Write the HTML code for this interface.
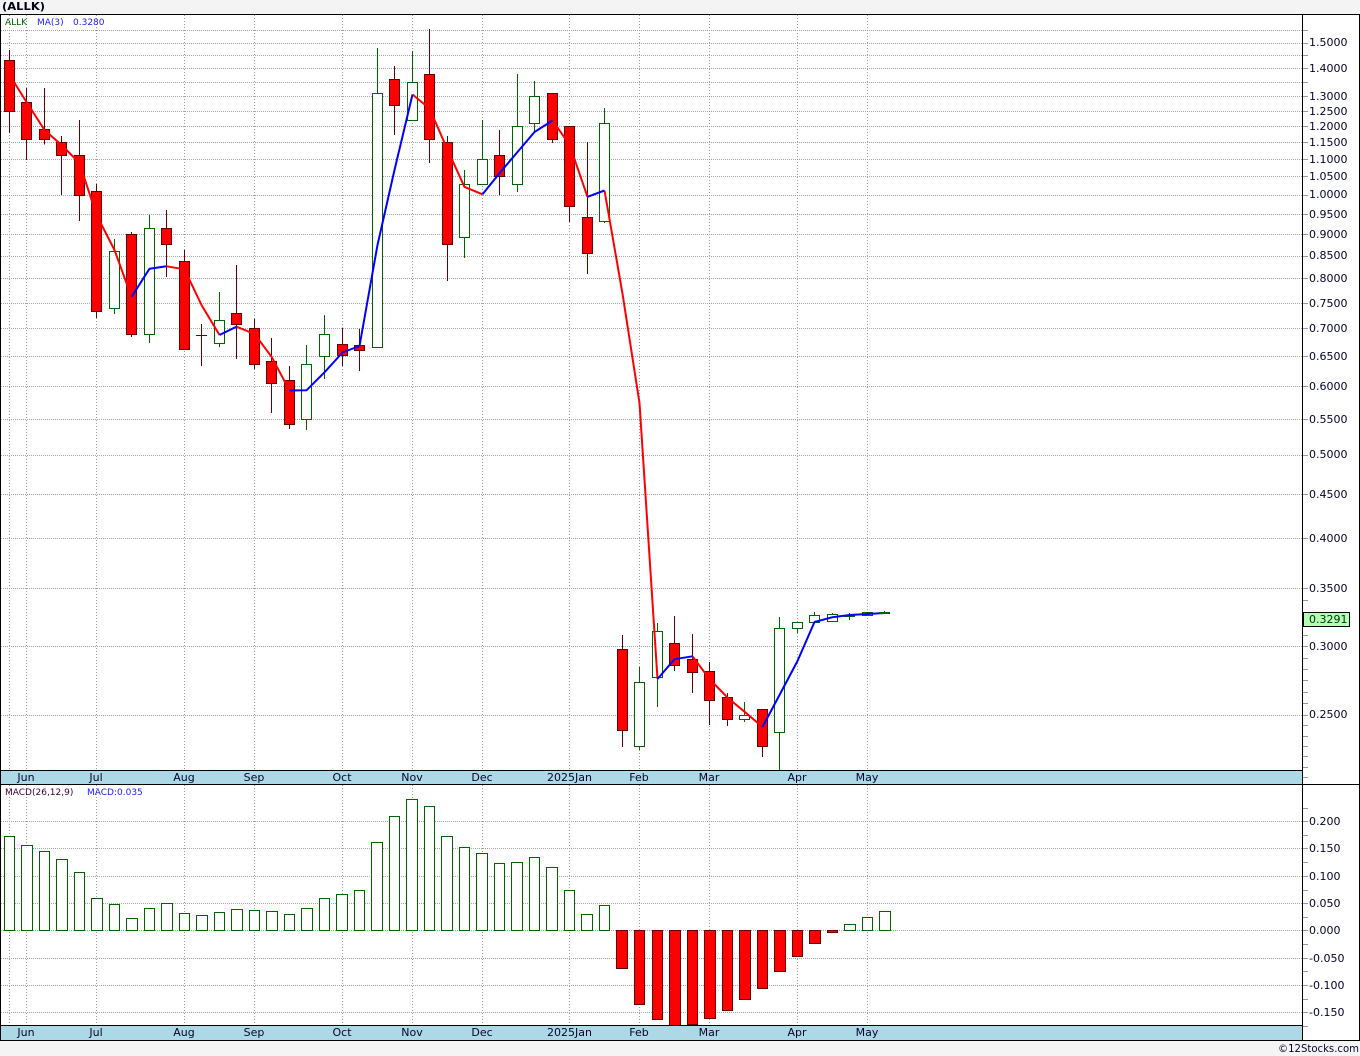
<!DOCTYPE html>
<html><head><meta charset="utf-8"><title>ALLK</title>
<style>
html,body{margin:0;padding:0;background:#f4f4f4;width:1360px;height:1056px;overflow:hidden}
svg{display:block}
text{font-family:"DejaVu Sans",Verdana,sans-serif;font-size:11px;fill:#05052e}
.c{shape-rendering:crispEdges}
.r{fill:#f00;stroke:#660000}
.g{fill:#fff;stroke:#006400}
.m text{text-anchor:middle}
.s{font-size:9px}
</style></head><body>
<svg width="1360" height="1056" viewBox="0 0 1360 1056" xmlns="http://www.w3.org/2000/svg">
<rect x="0" y="0" width="1360" height="1056" fill="#f4f4f4"/>
<rect x="0" y="14" width="1360" height="1026" fill="#fff"/>
<text x="2" y="10" textLength="43" lengthAdjust="spacingAndGlyphs" style="font-weight:bold;fill:#000014">(ALLK)</text>

<!-- grid -->
<g class="c" fill="none" stroke="#a6a6a6" stroke-dasharray="1 1">
<path d="M1 30.5H1302M1 43.5H1302M1 55.5H1302M1 68.5H1302M1 82.5H1302M1 96.5H1302M1 111.5H1302M1 126.5H1302M1 142.5H1302M1 159.5H1302M1 176.5H1302M1 195.5H1302M1 214.5H1302M1 234.5H1302M1 256.5H1302M1 278.5H1302M1 303.5H1302M1 328.5H1302M1 356.5H1302M1 386.5H1302M1 419.5H1302M1 455.5H1302M1 494.5H1302M1 538.5H1302M1 588.5H1302M1 646.5H1302M1 715.5H1302"/>
<path d="M1 821.5H1302M1 848.5H1302M1 876.5H1302M1 903.5H1302M1 930.5H1302M1 958.5H1302M1 985.5H1302M1 1012.5H1302"/>
</g>
<g class="c" fill="none" stroke="#999" stroke-dasharray="1 2">
<path d="M9.5 15V770M26.5 15V770M96.5 15V770M184.5 15V770M254.5 15V770M342.5 15V770M412.5 15V770M482.5 15V770M569.5 15V770M639.5 15V770M709.5 15V770M797.5 15V770M867.5 15V770"/>
<path d="M9.5 785V1025M26.5 785V1025M96.5 785V1025M184.5 785V1025M254.5 785V1025M342.5 785V1025M412.5 785V1025M482.5 785V1025M569.5 785V1025M639.5 785V1025M709.5 785V1025M797.5 785V1025M867.5 785V1025"/>
</g>

<!-- wicks -->
<path class="c" fill="none" stroke="#660000" d="M9.5 50V133M26.5 88V160M44.5 88V144.5M61.5 136V195M79.5 120V221M96.5 184V318M131.5 232V337M166.5 210V277M184.5 250V350M201.5 324V366M236.5 265V359M254.5 319V369M271.5 338V413M289.5 366V429M342.5 328V366M359.5 329V371M394.5 66V135M429.5 29V163M447.5 136V281M499.5 130V195M552.5 93V143M569.5 126V222M587.5 142V274M622.5 635V747M674.5 616V671M692.5 634V693M709.5 662V725M727.5 693V726M762.5 709V757M196 335.5H207"/>
<path class="c" fill="none" stroke="#006400" d="M114.5 239V314M149.5 215V343M219.5 292V347M306.5 345V430M324.5 315V379M377.5 48V347M412.5 51V120M464.5 170V258M482.5 120V184M517.5 74V192M534.5 81V133M604.5 108V223M639.5 667V750M657.5 623V707M744.5 702V722M779.5 617V770M797.5 622V633M814.5 612V622M832.5 613V621M849.5 613V620M867.5 612V615M884.5 611V614"/>

<!-- candle bodies -->
<g class="c">
<rect class="r" x="4.5" y="60.5" width="10" height="51"/>
<rect class="r" x="21.5" y="102.5" width="10" height="37"/>
<rect class="r" x="39.5" y="129.5" width="10" height="10"/>
<rect class="r" x="56.5" y="142.5" width="10" height="13"/>
<rect class="r" x="74.5" y="155.5" width="10" height="40"/>
<rect class="r" x="91.5" y="191.5" width="10" height="120"/>
<rect class="g" x="109.5" y="251.5" width="10" height="57"/>
<rect class="r" x="126.5" y="234.5" width="10" height="100"/>
<rect class="g" x="144.5" y="228.5" width="10" height="106"/>
<rect class="r" x="161.5" y="228.5" width="10" height="16"/>
<rect class="r" x="179.5" y="261.5" width="10" height="88"/>
<rect class="g" x="214.5" y="320.5" width="10" height="23"/>
<rect class="r" x="231.5" y="313.5" width="10" height="11"/>
<rect class="r" x="249.5" y="328.5" width="10" height="36"/>
<rect class="r" x="266.5" y="361.5" width="10" height="22"/>
<rect class="r" x="284.5" y="380.5" width="10" height="44"/>
<rect class="g" x="301.5" y="364.5" width="10" height="55"/>
<rect class="g" x="319.5" y="334.5" width="10" height="22"/>
<rect class="r" x="337.5" y="344.5" width="10" height="11"/>
<rect class="r" x="354.5" y="345.5" width="10" height="5"/>
<rect class="g" x="372.5" y="93.5" width="10" height="254"/>
<rect class="r" x="389.5" y="79.5" width="10" height="26"/>
<rect class="g" x="407.5" y="82.5" width="10" height="38"/>
<rect class="r" x="424.5" y="74.5" width="10" height="65"/>
<rect class="r" x="442.5" y="142.5" width="10" height="102"/>
<rect class="g" x="459.5" y="184.5" width="10" height="53"/>
<rect class="g" x="477.5" y="159.5" width="10" height="25"/>
<rect class="r" x="494.5" y="155.5" width="10" height="21"/>
<rect class="g" x="512.5" y="126.5" width="10" height="58"/>
<rect class="g" x="529.5" y="96.5" width="10" height="27"/>
<rect class="r" x="547.5" y="93.5" width="10" height="46"/>
<rect class="r" x="564.5" y="126.5" width="10" height="80"/>
<rect class="r" x="582.5" y="217.5" width="10" height="36"/>
<rect class="g" x="599.5" y="123.5" width="10" height="98"/>
<rect class="r" x="617.5" y="649.5" width="10" height="81"/>
<rect class="g" x="634.5" y="682.5" width="10" height="64"/>
<rect class="g" x="652.5" y="631.5" width="10" height="46"/>
<rect class="r" x="669.5" y="643.5" width="10" height="22"/>
<rect class="r" x="687.5" y="659.5" width="10" height="13"/>
<rect class="r" x="704.5" y="671.5" width="10" height="29"/>
<rect class="r" x="722.5" y="697.5" width="10" height="22"/>
<rect class="g" x="739.5" y="715.5" width="10" height="4"/>
<rect class="r" x="757.5" y="709.5" width="10" height="37"/>
<rect class="g" x="774.5" y="628.5" width="10" height="104"/>
<rect class="g" x="792.5" y="622.5" width="10" height="6"/>
<rect class="g" x="809.5" y="615.5" width="10" height="7"/>
<rect class="g" x="827.5" y="614.5" width="10" height="7"/>
<rect class="g" x="844.5" y="615.5" width="10" height="1"/>
<rect class="g" x="862.5" y="612.5" width="10" height="3"/>
</g>

<!-- MA line -->
<g fill="none" stroke-width="2" stroke-linejoin="round">
<g stroke="#ff0000">
<polyline points="9.5,75 26.5,102 44.5,130 61.5,145 79.5,163 96.5,215 114.5,250 131.5,297"/>
<polyline points="166.5,266.3 184.5,269.3 201.5,305 219.5,335"/>
<polyline points="236.5,326.7 254.5,334 271.5,356.7 289.5,390.5"/>
<polyline points="412.5,94.5 429.5,108.5 447.5,149.6 464.5,186.9 482.5,194.3"/>
<polyline points="552.5,120.5 569.5,144.7 587.5,196.8"/>
<polyline points="604.5,190.5 622.5,293.7 639.5,403 657.5,679"/>
<polyline points="692.5,656.3 709.5,679 727.5,697.6 744.5,711.7 762.5,727"/>
</g>
<g stroke="#0000ff">
<polyline points="131.5,297 149.5,268.7 166.5,266.3"/>
<polyline points="219.5,335 236.5,326.7"/>
<polyline points="289.5,390.5 306.5,390.3 324.5,372.3 342.5,352.5 359.5,346 377.5,245 394.5,170 412.5,94.5"/>
<polyline points="482.5,194.3 499.5,173.2 517.5,152 534.5,132 552.5,120.5"/>
<polyline points="587.5,196.8 604.5,190.5"/>
<polyline points="657.5,679 674.5,659.2 692.5,656.3"/>
<polyline points="762.5,727 779.5,695 797.5,661 814.5,622 832.5,617.2 849.5,615 867.5,614 884.5,613"/>
</g>
</g>
<rect class="c" x="879" y="612" width="11" height="2" fill="#006400"/>

<!-- MACD bars -->
<g class="c">
<rect class="g" x="4.5" y="836.5" width="10" height="94"/>
<rect class="g" x="21.5" y="845.5" width="11" height="85"/>
<rect class="g" x="39.5" y="851.5" width="10" height="79"/>
<rect class="g" x="56.5" y="859.5" width="11" height="71"/>
<rect class="g" x="74.5" y="872.5" width="10" height="58"/>
<rect class="g" x="91.5" y="898.5" width="11" height="32"/>
<rect class="g" x="109.5" y="904.5" width="10" height="26"/>
<rect class="g" x="126.5" y="918.5" width="11" height="12"/>
<rect class="g" x="144.5" y="908.5" width="10" height="22"/>
<rect class="g" x="161.5" y="903.5" width="11" height="27"/>
<rect class="g" x="179.5" y="913.5" width="10" height="17"/>
<rect class="g" x="196.5" y="915.5" width="11" height="15"/>
<rect class="g" x="214.5" y="912.5" width="10" height="18"/>
<rect class="g" x="231.5" y="909.5" width="11" height="21"/>
<rect class="g" x="249.5" y="910.5" width="10" height="20"/>
<rect class="g" x="266.5" y="911.5" width="11" height="19"/>
<rect class="g" x="284.5" y="914.5" width="10" height="16"/>
<rect class="g" x="301.5" y="908.5" width="11" height="22"/>
<rect class="g" x="319.5" y="898.5" width="10" height="32"/>
<rect class="g" x="336.5" y="894.5" width="11" height="36"/>
<rect class="g" x="354.5" y="890.5" width="10" height="40"/>
<rect class="g" x="371.5" y="842.5" width="11" height="88"/>
<rect class="g" x="389.5" y="816.5" width="10" height="114"/>
<rect class="g" x="406.5" y="799.5" width="11" height="131"/>
<rect class="g" x="424.5" y="806.5" width="10" height="124"/>
<rect class="g" x="441.5" y="836.5" width="11" height="94"/>
<rect class="g" x="459.5" y="847.5" width="10" height="83"/>
<rect class="g" x="476.5" y="853.5" width="11" height="77"/>
<rect class="g" x="494.5" y="863.5" width="10" height="67"/>
<rect class="g" x="511.5" y="862.5" width="11" height="68"/>
<rect class="g" x="529.5" y="857.5" width="10" height="73"/>
<rect class="g" x="546.5" y="867.5" width="11" height="63"/>
<rect class="g" x="564.5" y="890.5" width="10" height="40"/>
<rect class="g" x="581.5" y="914.5" width="11" height="16"/>
<rect class="g" x="599.5" y="905.5" width="10" height="25"/>
<rect class="r" x="616.5" y="930.5" width="11" height="38"/>
<rect class="r" x="634.5" y="930.5" width="10" height="74"/>
<rect class="r" x="652.5" y="930.5" width="10" height="89"/>
<rect class="r" x="669.5" y="930.5" width="11" height="95"/>
<rect class="r" x="687.5" y="930.5" width="10" height="94"/>
<rect class="r" x="704.5" y="930.5" width="11" height="88"/>
<rect class="r" x="722.5" y="930.5" width="10" height="80"/>
<rect class="r" x="739.5" y="930.5" width="11" height="69"/>
<rect class="r" x="757.5" y="930.5" width="10" height="58"/>
<rect class="r" x="774.5" y="930.5" width="11" height="41"/>
<rect class="r" x="792.5" y="930.5" width="10" height="26"/>
<rect class="r" x="809.5" y="930.5" width="11" height="13"/>
<rect class="r" x="827.5" y="930.5" width="10" height="2"/>
<rect class="g" x="844.5" y="924.5" width="11" height="6"/>
<rect class="g" x="862.5" y="917.5" width="10" height="13"/>
<rect class="g" x="879.5" y="911.5" width="11" height="19"/>
</g>

<!-- date bars -->
<rect class="c" x="1" y="770" width="1301" height="14" fill="#add8e6"/>
<rect class="c" x="1" y="1025" width="1301" height="15" fill="#add8e6"/>

<!-- ticks -->
<path class="c" fill="none" stroke="#999" d="M1303 30.5H1308M1303 43.5H1308M1303 55.5H1308M1303 68.5H1308M1303 82.5H1308M1303 96.5H1308M1303 111.5H1308M1303 126.5H1308M1303 142.5H1308M1303 159.5H1308M1303 176.5H1308M1303 195.5H1308M1303 214.5H1308M1303 234.5H1308M1303 256.5H1308M1303 278.5H1308M1303 303.5H1308M1303 328.5H1308M1303 356.5H1308M1303 386.5H1308M1303 419.5H1308M1303 455.5H1308M1303 494.5H1308M1303 538.5H1308M1303 588.5H1308M1303 600.5H1308M1303 635.5H1308M1303 646.5H1308M1303 658.5H1308M1303 669.5H1308M1303 680.5H1308M1303 692.5H1308M1303 703.5H1308M1303 715.5H1308M1303 725.5H1308M1303 736.5H1308M1303 746.5H1308M1303 756.5H1308M1303 767.5H1308M1303 777.5H1308M1303 808.5H1308M1303 821.5H1308M1303 835.5H1308M1303 848.5H1308M1303 862.5H1308M1303 876.5H1308M1303 890.5H1308M1303 903.5H1308M1303 917.5H1308M1303 930.5H1308M1303 944.5H1308M1303 958.5H1308M1303 971.5H1308M1303 985.5H1308M1303 999.5H1308M1303 1012.5H1308M1303 1026.5H1308"/>

<!-- frame -->
<g class="c" fill="none" stroke="#000">
<path d="M0 14.5H1360M0.5 14V1040M1302.5 14V1040M1359.5 14V1040M0 1040.5H1360M0 770.5H1302M0 784.5H1360M0 1025.5H1302"/>
</g>

<!-- price label -->
<rect class="c" x="1303.5" y="612.5" width="46" height="14" fill="#b3ffb3" stroke="#000"/>

<!-- legends -->
<text class="s" x="5" y="25" style="fill:#006400">ALLK</text>
<text class="s" x="37" y="25" style="fill:#2020ff">MA(3)</text>
<text class="s" x="73" y="25" style="fill:#2020ff">0.3280</text>
<text class="s" x="5" y="795" style="fill:#400030">MACD(26,12,9)</text>
<text class="s" x="87" y="795" style="fill:#2020ff">MACD:0.035</text>

<!-- y labels -->
<g>
<text x="1309" y="46">1.5000</text>
<text x="1309" y="72">1.4000</text>
<text x="1309" y="100">1.3000</text>
<text x="1309" y="115">1.2500</text>
<text x="1309" y="130">1.2000</text>
<text x="1309" y="146">1.1500</text>
<text x="1309" y="163">1.1000</text>
<text x="1309" y="180">1.0500</text>
<text x="1309" y="198">1.0000</text>
<text x="1309" y="218">0.9500</text>
<text x="1309" y="238">0.9000</text>
<text x="1309" y="259">0.8500</text>
<text x="1309" y="282">0.8000</text>
<text x="1309" y="307">0.7500</text>
<text x="1309" y="332">0.7000</text>
<text x="1309" y="360">0.6500</text>
<text x="1309" y="390">0.6000</text>
<text x="1309" y="423">0.5500</text>
<text x="1309" y="458">0.5000</text>
<text x="1309" y="498">0.4500</text>
<text x="1309" y="542">0.4000</text>
<text x="1309" y="592">0.3500</text>
<text x="1309" y="623" style="fill:#003010">0.3291</text>
<text x="1309" y="650">0.3000</text>
<text x="1309" y="718">0.2500</text>
<text x="1309" y="825">0.200</text>
<text x="1309" y="852">0.150</text>
<text x="1309" y="880">0.100</text>
<text x="1309" y="907">0.050</text>
<text x="1309" y="934">0.000</text>
<text x="1309" y="962">-0.050</text>
<text x="1309" y="989">-0.100</text>
<text x="1309" y="1016">-0.150</text>
</g>

<!-- month labels -->
<g class="m">
<text x="26" y="781">Jun</text><text x="96" y="781">Jul</text><text x="184" y="781">Aug</text><text x="254" y="781">Sep</text><text x="342" y="781">Oct</text><text x="412" y="781">Nov</text><text x="482" y="781">Dec</text><text x="569.5" y="781">2025Jan</text><text x="639" y="781">Feb</text><text x="709" y="781">Mar</text><text x="797" y="781">Apr</text><text x="867" y="781">May</text>
<text x="26" y="1036">Jun</text><text x="96" y="1036">Jul</text><text x="184" y="1036">Aug</text><text x="254" y="1036">Sep</text><text x="342" y="1036">Oct</text><text x="412" y="1036">Nov</text><text x="482" y="1036">Dec</text><text x="569.5" y="1036">2025Jan</text><text x="639" y="1036">Feb</text><text x="709" y="1036">Mar</text><text x="797" y="1036">Apr</text><text x="867" y="1036">May</text>
</g>

<text x="1278" y="1052" textLength="81" lengthAdjust="spacingAndGlyphs">©12Stocks.com</text>
</svg>
</body></html>
